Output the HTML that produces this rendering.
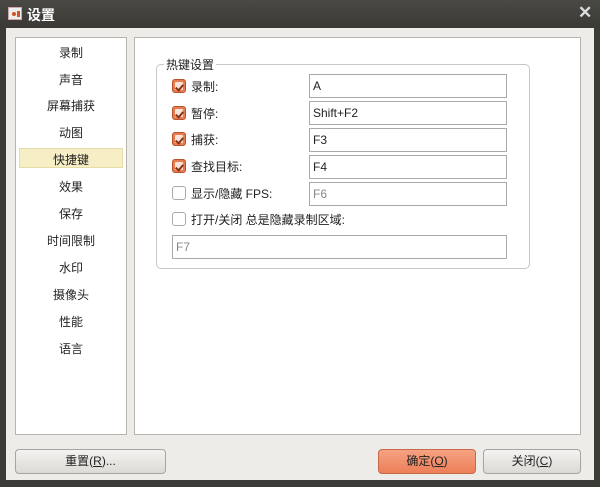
<!DOCTYPE html>
<html><head><meta charset="utf-8"><style>
*{margin:0;padding:0;box-sizing:border-box}
body{width:600px;height:487px;background:#3c3b37;font-family:"Liberation Sans","Noto Sans CJK SC",sans-serif;font-size:12px;color:#222;position:relative;overflow:hidden}
.abs{position:absolute}
.title{left:0;top:0;width:600px;height:28px;background:linear-gradient(#4a4944,#3a3935)}
.body{left:6px;top:28px;width:588px;height:452px;background:#edece8}
.panel{background:#fff;border:1px solid #b8b5ae}
.item{position:absolute;left:0;width:110px;text-align:center;font-size:12px}
.sel{position:absolute;left:3px;width:104px;height:20px;background:#f6efc6;border:1px solid #e6dca8}
.cb{position:absolute;left:172px;width:14px;height:14px;border-radius:3px}
.cb.on{background:#e87c4f;border:1px solid #b5532c}
.cb.on::after{content:"";position:absolute;left:2px;top:2px;width:8px;height:8px;background:#f7e3d8;border-radius:1px}
.cb.on::before{content:"";position:absolute;left:4px;top:3px;width:3px;height:6px;border:solid #8a3216;border-width:0 2px 2px 0;transform:rotate(40deg);z-index:2}
.cb.off{background:#fff;border:1px solid #aaa}
.lbl{position:absolute;left:191px;font-size:12px}
.inp{position:absolute;left:309px;width:198px;height:24px;background:#fff;border:1px solid #aaa;padding:4px 3px;font-size:12px}
.btn{position:absolute;top:449px;height:25px;border:1px solid #a7a59f;border-radius:4px;background:linear-gradient(#f4f3f1,#dcdad5);text-align:center;line-height:23px;font-size:12px}
</style></head><body>
<div class="abs title"></div>
<div class="abs" style="left:8px;top:7px;width:14px;height:13px;background:#eee;border:1px solid #caa"><div class="abs" style="left:3px;top:4px;width:4px;height:4px;border-radius:2px;background:#d2552c"></div><div class="abs" style="left:8px;top:3px;width:3px;height:6px;background:#d2552c"></div></div>
<div class="abs" style="left:27px;top:5px;color:#fff;font-size:14px;font-weight:bold">设置</div>
<div class="abs" style="left:578px;top:3px;color:#ddd;font-size:17px;font-weight:bold">✕</div>
<div class="abs body"></div>
<div class="abs panel" style="left:15px;top:37px;width:112px;height:398px">
<div class="sel" style="top:110px"></div>
<div class="item" style="top:6px">录制</div>
<div class="item" style="top:33px">声音</div>
<div class="item" style="top:59px">屏幕捕获</div>
<div class="item" style="top:86px">动图</div>
<div class="item" style="top:113px">快捷键</div>
<div class="item" style="top:140px">效果</div>
<div class="item" style="top:167px">保存</div>
<div class="item" style="top:194px">时间限制</div>
<div class="item" style="top:221px">水印</div>
<div class="item" style="top:248px">摄像头</div>
<div class="item" style="top:275px">性能</div>
<div class="item" style="top:302px">语言</div>
</div>
<div class="abs panel" style="left:134px;top:37px;width:447px;height:398px"></div>
<div class="abs" style="left:156px;top:64px;width:374px;height:205px;border:1px solid #c8c6c0;border-radius:5px"></div>
<div class="abs" style="left:164px;top:56px;background:#fff;padding:0 2px">热键设置</div>
<div class="cb on" style="top:79px"></div><div class="lbl" style="top:78px">录制:</div><div class="inp" style="top:74px">A</div>
<div class="cb on" style="top:106px"></div><div class="lbl" style="top:105px">暂停:</div><div class="inp" style="top:101px">Shift+F2</div>
<div class="cb on" style="top:132px"></div><div class="lbl" style="top:131px">捕获:</div><div class="inp" style="top:128px">F3</div>
<div class="cb on" style="top:159px"></div><div class="lbl" style="top:158px">查找目标:</div><div class="inp" style="top:155px">F4</div>
<div class="cb off" style="top:186px"></div><div class="lbl" style="top:185px">显示/隐藏 FPS:</div><div class="inp" style="top:182px;color:#888">F6</div>
<div class="cb off" style="top:212px"></div><div class="lbl" style="top:211px">打开/关闭 总是隐藏录制区域:</div>
<div class="inp" style="top:235px;left:172px;width:335px;color:#888">F7</div>
<div class="btn" style="left:15px;width:151px">重置(<u>R</u>)...</div>
<div class="btn" style="left:378px;width:98px;background:linear-gradient(#f6a283,#ec7f58);border-color:#c66a48">确定(<u>O</u>)</div>
<div class="btn" style="left:483px;width:98px">关闭(<u>C</u>)</div>
</body></html>
